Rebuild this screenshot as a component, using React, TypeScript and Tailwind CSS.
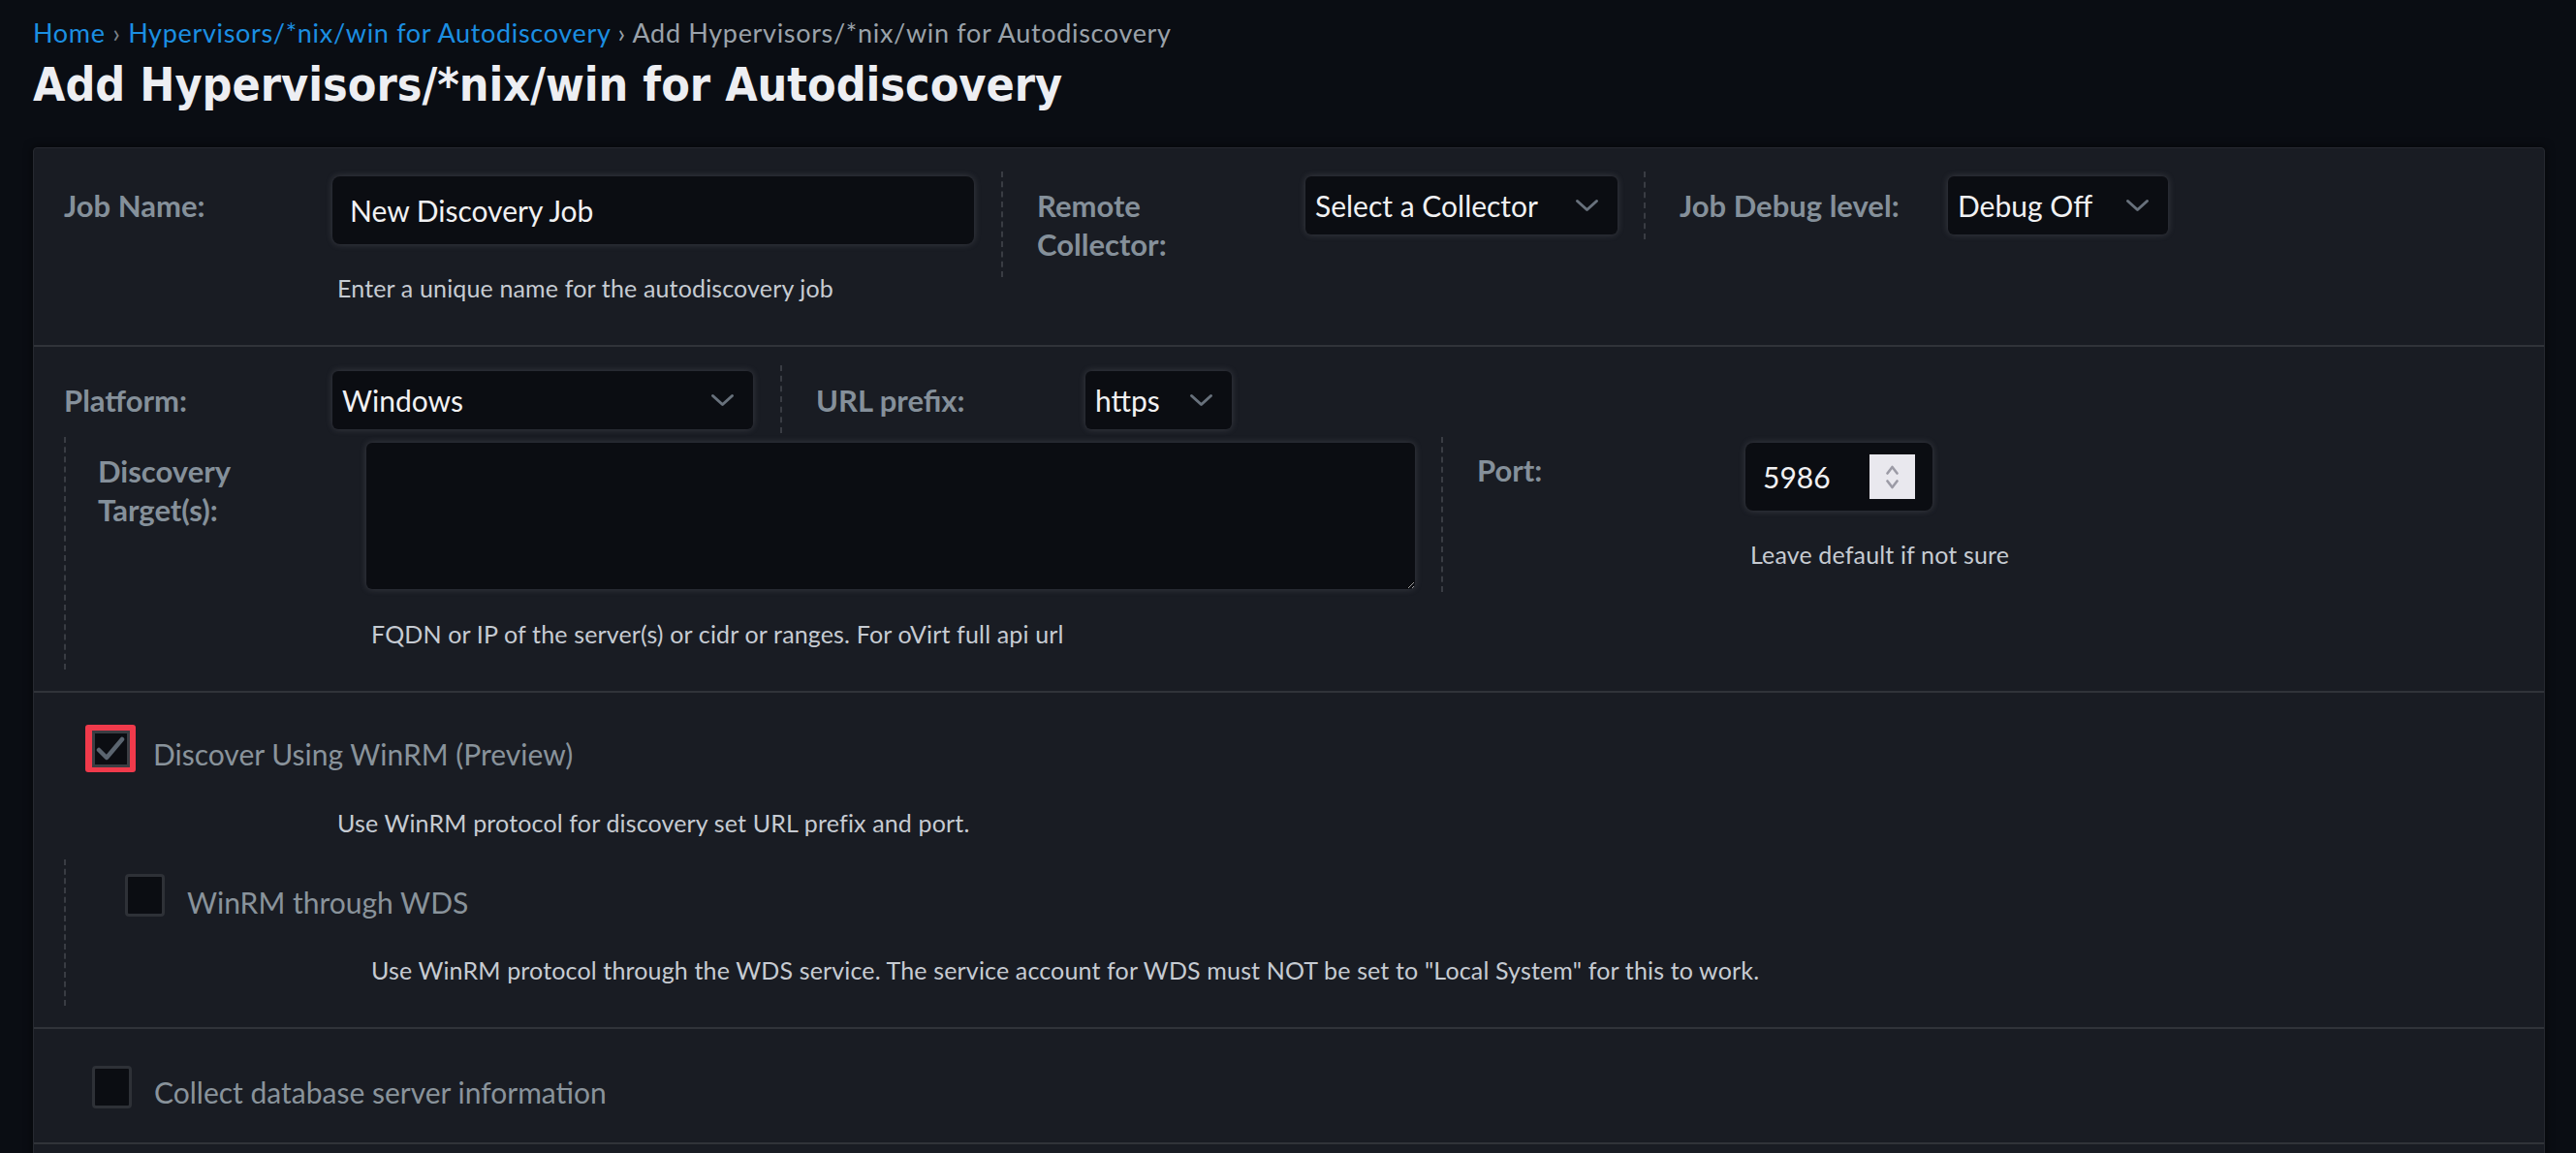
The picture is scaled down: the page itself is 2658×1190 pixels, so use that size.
import React from 'react';

const Chevron = () => (
  <svg width="25" height="14" viewBox="0 0 25 14" fill="none" className="shrink-0">
    <path d="M2.5 2.5l10 9 10-9" stroke="#68717c" strokeWidth="3" strokeLinecap="round" strokeLinejoin="round" />
  </svg>
);

const Select = ({ value, className }: { value: string; className: string }) => (
  <div
    className={`flex h-[60px] shrink-0 items-center justify-between rounded-md bg-[#0b0d12] pl-[10px] pr-[19px] text-[30px] text-[#f1f1f3] shadow-[0_0_7px_rgba(150,150,160,0.28)] ${className}`}
  >
    <span className="leading-none">{value}</span>
    <Chevron />
  </div>
);

const Label = ({ children, className = '' }: { children: React.ReactNode; className?: string }) => (
  <div className={`w-[277px] shrink-0 text-[31px] font-bold leading-[40px] text-[#85909a] ${className}`}>{children}</div>
);

const Hint = ({ children, className = '' }: { children: React.ReactNode; className?: string }) => (
  <div className={`pl-[5px] text-[25px] leading-[30px] tracking-[0.006em] text-[#c6cbd2] ${className}`}>{children}</div>
);

const Divider = ({ className }: { className: string }) => (
  <div className={`shrink-0 border-l-2 border-dashed border-[#393c43] ${className}`} />
);

const Checkbox = ({ checked = false }: { checked?: boolean }) => {
  if (checked) {
    return (
      <div className="flex h-[49px] w-[52px] shrink-0 items-center justify-center rounded-[3px] bg-[#f03a4b]">
        <div className="flex h-[38px] w-[39px] items-center justify-center border-[3px] border-[#3a3d43] bg-[#0b0d12]">
          <svg width="30" height="26" viewBox="0 0 30 26" fill="none">
            <path d="M3 14l8 8L27 3" stroke="#5b6570" strokeWidth="4.5" strokeLinecap="round" strokeLinejoin="round" />
          </svg>
        </div>
      </div>
    );
  }
  return <div className="h-[44px] w-[41px] shrink-0 rounded-[4px] border-[3px] border-[#2e3137] bg-[#0b0d12]" />;
};

export default function App() {
  return (
    <div className="min-h-screen bg-[#0a0d13] pl-[34px] pr-[32px] font-['Lato','Liberation_Sans',sans-serif]">
      <div className="pt-[19px] text-[27px] leading-[30px] tracking-[0.025em]">
        <span className="text-[#1b8fe2]">Home</span>
        <span className="text-[#7b8189]"> › </span>
        <span className="text-[#1b8fe2]">Hypervisors/*nix/win for Autodiscovery</span>
        <span className="text-[#9aa2aa]"> › Add Hypervisors/*nix/win for Autodiscovery</span>
      </div>
      <h1 className="mt-[10px] font-['DejaVu_Sans_Condensed','DejaVu_Sans',sans-serif] text-[48px] font-bold leading-[56px] text-[#edeef2]">
        Add Hypervisors/*nix/win for Autodiscovery
      </h1>

      <div className="mt-[37px] rounded-[4px] border border-[#262930] bg-[#191c23] shadow-[0_0_10px_rgba(0,0,0,0.6)]">
        {/* job name / collector / debug */}
        <div className="flex items-start border-b-2 border-[#303339] pb-[44px] pl-[31px] pt-[29px]">
          <Label className="pt-[10px]">Job Name:</Label>
          <div className="shrink-0">
            <div className="flex h-[70px] w-[662px] items-center rounded-lg bg-[#0b0d12] pl-[18px] text-[30px] text-[#f1f1f3] shadow-[0_0_7px_rgba(150,150,160,0.28)]">
              New Discovery Job
            </div>
            <Hint className="mt-[30px]">Enter a unique name for the autodiscovery job</Hint>
          </div>
          <Divider className="-mt-[5px] ml-[28px] h-[109px]" />
          <Label className="ml-[35px] w-[276px] pt-[10px]">
            Remote
            <br />
            Collector:
          </Label>
          <Select value="Select a Collector" className="w-[322px]" />
          <Divider className="-mt-[5px] ml-[27px] h-[70px]" />
          <Label className="ml-[35px] pt-[10px]">Job Debug level:</Label>
          <Select value="Debug Off" className="w-[227px]" />
        </div>

        {/* platform / targets / port */}
        <div className="border-b-2 border-[#303339] pb-[22px] pl-[31px] pt-[25px]">
          <div className="flex items-start">
            <Label className="pt-[10px]">Platform:</Label>
            <Select value="Windows" className="w-[434px]" />
            <Divider className="-mt-[6px] ml-[28px] h-[70px]" />
            <Label className="ml-[35px] w-[278px] pt-[10px]">URL prefix:</Label>
            <Select value="https" className="w-[151px]" />
          </div>
          <div className="mt-[4px] flex items-start border-l-2 border-dashed border-[#393c43] pb-[22px] pl-[33px] pt-[6px]">
            <Label className="pt-[9px] leading-[39px]">
              Discovery
              <br />
              Target(s):
            </Label>
            <div className="shrink-0">
              <textarea className="block h-[151px] w-[1082px] rounded-md bg-[#0b0d12] text-[28px] text-[#f1f1f3] shadow-[0_0_7px_rgba(150,150,160,0.28)] outline-none" />
              <Hint className="mt-[31px]">FQDN or IP of the server(s) or cidr or ranges. For oVirt full api url</Hint>
            </div>
            <Divider className="-mt-[6px] ml-[27px] h-[160px]" />
            <Label className="ml-[35px] pt-[8px]">Port:</Label>
            <div className="shrink-0">
              <div className="flex h-[70px] w-[193px] items-center justify-between rounded-lg bg-[#0b0d12] pl-[18px] pr-[18px] text-[30px] text-[#f1f1f3] shadow-[0_0_7px_rgba(150,150,160,0.28)]">
                <span>5986</span>
                <div className="flex h-[46px] w-[47px] flex-col items-center justify-center gap-[5px] bg-[#e9e8ee]">
                  <svg width="13" height="10" viewBox="0 0 13 10" fill="none">
                    <path d="M1.5 8.5L6.5 2l5 6.5" stroke="#9c9ba6" strokeWidth="2.6" strokeLinecap="round" strokeLinejoin="round" />
                  </svg>
                  <svg width="13" height="10" viewBox="0 0 13 10" fill="none">
                    <path d="M1.5 1.5L6.5 8l5-6.5" stroke="#9c9ba6" strokeWidth="2.6" strokeLinecap="round" strokeLinejoin="round" />
                  </svg>
                </div>
              </div>
              <Hint className="mt-[30px]">Leave default if not sure</Hint>
            </div>
          </div>
        </div>

        {/* winrm */}
        <div className="border-b-2 border-[#303339] pb-[22px] pl-[31px] pt-[33px]">
          <div className="ml-[22px] flex items-start">
            <Checkbox checked />
            <div className="ml-[18px] mt-[10px] text-[30px] leading-[40px] text-[#89939b]">Discover Using WinRM (Preview)</div>
          </div>
          <Hint className="mt-[36px] pl-[282px]">Use WinRM protocol for discovery set URL prefix and port.</Hint>
          <div className="mt-[23px] border-l-2 border-dashed border-[#393c43] pb-[22px] pl-[61px] pt-[15px]">
            <div className="flex items-start">
              <Checkbox />
              <div className="ml-[23px] mt-[9px] text-[30px] leading-[40px] text-[#89939b]">WinRM through WDS</div>
            </div>
            <Hint className="mt-[35px] pl-[254px]">
              Use WinRM protocol through the WDS service. The service account for WDS must NOT be set to "Local System" for this to work.
            </Hint>
          </div>
        </div>

        {/* database */}
        <div className="border-b-2 border-[#303339] pb-[32px] pl-[31px] pt-[38px]">
          <div className="ml-[29px] flex items-start">
            <Checkbox />
            <div className="ml-[23px] mt-[7px] text-[30px] leading-[40px] text-[#89939b]">Collect database server information</div>
          </div>
        </div>
        <div className="h-[120px]" />
      </div>
    </div>
  );
}
